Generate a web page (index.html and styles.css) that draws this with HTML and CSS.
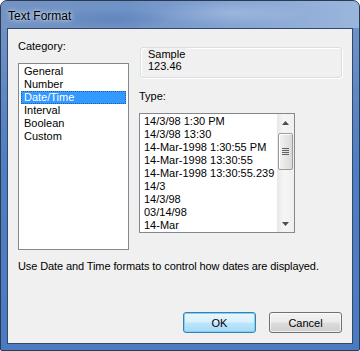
FILE: index.html
```html
<!DOCTYPE html>
<html>
<head>
<meta charset="utf-8">
<link rel="stylesheet" href="styles.css">
</head>
<body>
<div class="window">
  <div class="titlebar"><span class="title">Text Format</span></div>
  <div class="frame">
    <div class="client">
      <div class="top">
        <div class="col-left">
          <div class="label">Category:</div>
          <div class="listbox cat-list">
            <div class="item">General</div>
            <div class="item">Number</div>
            <div class="item selected">Date/Time</div>
            <div class="item">Interval</div>
            <div class="item">Boolean</div>
            <div class="item">Custom</div>
          </div>
        </div>
        <div class="col-right">
          <div class="group">
            <span class="group-label">Sample</span>
            <div class="group-value">123.46</div>
          </div>
          <div class="label type-label">Type:</div>
          <div class="listbox type-list">
            <div class="type-items">
              <div class="item">14/3/98 1:30 PM</div>
              <div class="item">14/3/98 13:30</div>
              <div class="item">14-Mar-1998 1:30:55 PM</div>
              <div class="item">14-Mar-1998 13:30:55</div>
              <div class="item">14-Mar-1998 13:30:55.239</div>
              <div class="item">14/3</div>
              <div class="item">14/3/98</div>
              <div class="item">03/14/98</div>
              <div class="item">14-Mar</div>
            </div>
            <div class="scrollbar">
              <div class="arrow"><svg width="7" height="4" viewBox="0 0 7 4"><polygon points="0,4 7,4 3.5,0" fill="#4d4d4d"/></svg></div>
              <div class="track">
                <div class="thumb">
                  <span class="grip"></span><span class="grip"></span><span class="grip"></span><span class="grip"></span>
                </div>
              </div>
              <div class="arrow"><svg width="7" height="4" viewBox="0 0 7 4"><polygon points="0,0 7,0 3.5,4" fill="#4d4d4d"/></svg></div>
            </div>
          </div>
        </div>
      </div>
      <div class="desc">Use Date and Time formats to control how dates are displayed.</div>
      <div class="buttons">
        <button class="btn default">OK</button>
        <button class="btn">Cancel</button>
      </div>
    </div>
  </div>
</div>
</body>
</html>
```
FILE: styles.css
```css
* { box-sizing: border-box; }
html, body { margin: 0; padding: 0; background: #ffffff; }
body { font-family: "Liberation Sans", Arial, sans-serif; font-size: 11px; color: #000; }

.window {
  width: 360px;
  height: 351px;
  border: 1px solid #2c3a50;
  border-radius: 7px 7px 2px 2px;
  overflow: hidden;
  display: flex;
  flex-direction: column;
  background: #4f7ec2;
}

.titlebar {
  height: 27px;
  flex: none;
  padding-left: 7px;
  display: flex;
  align-items: center;
  background:
    radial-gradient(ellipse 60px 10px at 110px 18px, rgba(70,110,170,0.35), rgba(70,110,170,0) 100%),
    radial-gradient(ellipse 80px 12px at 230px 12px, rgba(255,255,255,0.18), rgba(255,255,255,0) 100%),
    linear-gradient(90deg, #7293c3 0%, #6f92c6 35%, #86a5d3 65%, #9bb6dc 100%);
}
.title {
  font-family: "Liberation Sans", Arial, sans-serif;
  font-size: 12px;
  color: #000;
  text-shadow: 0 0 6px rgba(255,255,255,0.8), 0 0 3px rgba(255,255,255,0.6);
  padding-top: 2px;
}

.frame {
  flex: 1;
  padding: 0 6px 6px 6px;
  background: linear-gradient(180deg, #6d92c8 0%, #4f7ec2 40%, #4a7ac0 100%);
}

.client {
  height: 100%;
  border: 1px solid #34476a;
  background: #f0f0f0;
  padding: 11px 10px 0 10px;
  display: flex;
  flex-direction: column;
}

.top { display: flex; gap: 10px; }
.col-left { width: 111px; display: flex; flex-direction: column; }
.col-right { width: 203px; display: flex; flex-direction: column; }

.label { line-height: 13px; height: 13px; }

.listbox {
  background: #fff;
  border: 1px solid #828790;
}
.cat-list {
  margin-top: 10px;
  height: 187px;
  padding: 1px 1px;
}
.cat-list .item {
  line-height: 13px;
  height: 13px;
  padding-left: 3px;
  margin-left: 1px;
  margin-right: 1px;
  white-space: nowrap;
}
.cat-list .item.selected {
  background: #3399ff;
  color: #fff;
  outline: 1px dotted #1f5fa8;
  outline-offset: -1px;
}

.group {
  margin-top: 7px;
  margin-left: 1px;
  height: 31px;
  border: 1px solid #d5dfe5;
  border-radius: 3px;
  box-shadow: inset 1px 1px 0 #fff, 1px 1px 0 #fff;
  padding-left: 5px;
}
.group-label {
  display: inline-block;
  margin-top: -8px;
  padding: 0 2px;
  line-height: 13px;
  background: #f0f0f0;
}
.group-value { padding-left: 2px; line-height: 13px; margin-top: -1px; }

.type-label { margin-top: 12px; }

.type-list {
  margin-top: 10px;
  width: 156px;
  height: 120px;
  display: flex;
}
.type-items { flex: 1; padding: 1px 0 0 4px; overflow: hidden; }
.type-items .item { line-height: 13px; height: 13px; white-space: nowrap; }

.scrollbar {
  width: 17px;
  display: flex;
  flex-direction: column;
  background: linear-gradient(90deg, #e8e8e8, #f5f5f5 40%, #f0f0f0);
}
.arrow {
  height: 17px;
  display: flex;
  align-items: center;
  justify-content: center;
}
.track { flex: 1; padding-top: 2px; }
.thumb {
  margin: 0 1px;
  height: 37px;
  border: 1px solid #9b9b9b;
  border-radius: 2px;
  background: linear-gradient(90deg, #f3f3f3, #e6e6e6 50%, #d9d9d9);
  box-shadow: inset 1px 1px 0 #fff;
  display: flex;
  flex-direction: column;
  align-items: center;
  justify-content: center;
  gap: 1px;
}
.grip { display: block; width: 7px; height: 1px; background: #606060; }

.desc { margin-top: 10px; line-height: 13px; letter-spacing: -0.1px; }

.buttons {
  margin-top: 39px;
  display: flex;
  justify-content: flex-end;
  gap: 13px;
}
.btn {
  width: 73px;
  height: 21px;
  font-family: "Liberation Sans", Arial, sans-serif;
  font-size: 11px;
  color: #000;
  border: 1px solid #707070;
  border-radius: 3px;
  background: linear-gradient(180deg, #f2f2f2 0%, #ebebeb 48%, #dddddd 52%, #cfcfcf 100%);
  box-shadow: inset 0 0 0 1px rgba(255,255,255,0.7);
  padding: 0;
}
.btn.default {
  border-color: #3c7fb1;
  background: linear-gradient(180deg, #eaf6fd 0%, #d9f0fc 48%, #bee6fd 52%, #a7d9f5 100%);
  box-shadow: inset 0 0 0 1px #7fd3f7;
}
```
